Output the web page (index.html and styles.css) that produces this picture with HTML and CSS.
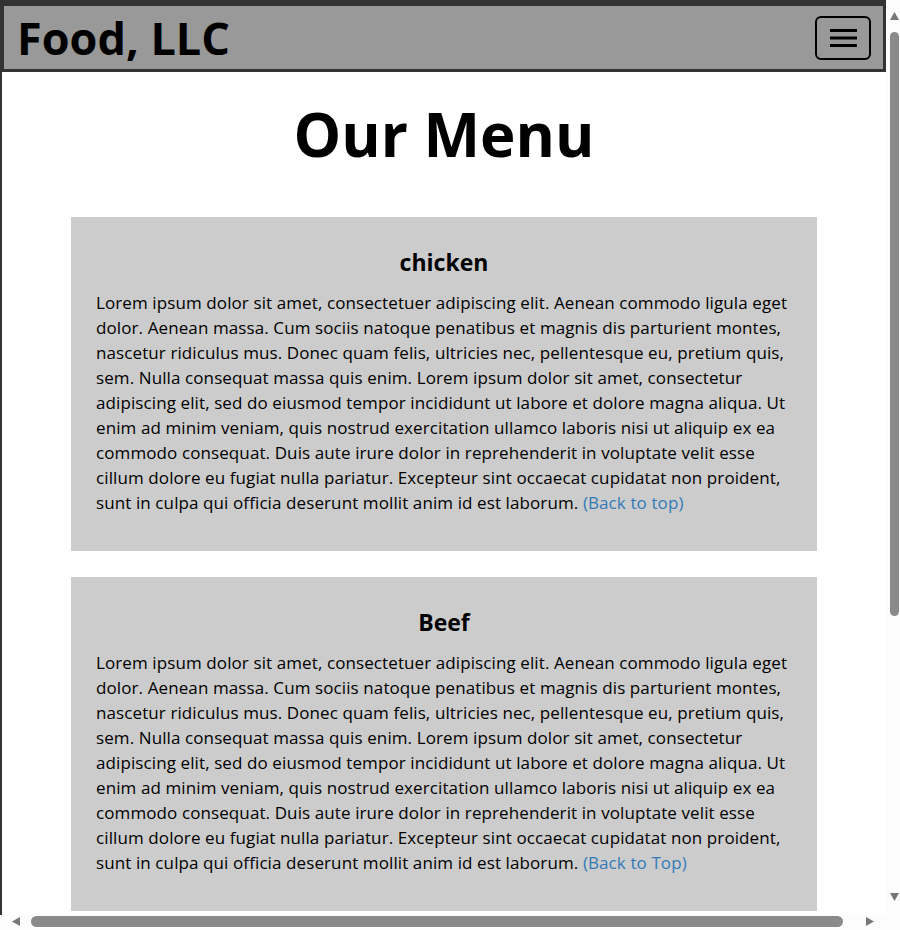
FILE: index.html
```html
<!DOCTYPE html>
<html lang="en">
<head>
<meta charset="utf-8">
<title>Food, LLC</title>
<link rel="stylesheet" href="styles.css">
</head>
<body>
<div class="window">
  <div class="viewport">
    <div class="page" id="top">
      <header class="site-header">
        <span class="brand">Food, LLC</span>
        <button class="menu-btn" aria-label="Menu">
          <svg width="27" height="18" viewBox="0 0 27 18"><path d="M0 1.5H27M0 9H27M0 16.5H27" stroke="#000" stroke-width="3"/></svg>
        </button>
      </header>
      <h1 class="title">Our Menu</h1>
      <section class="card" id="chicken">
        <h2>chicken</h2>
        <p>Lorem ipsum dolor sit amet, consectetuer adipiscing elit. Aenean commodo ligula eget dolor. Aenean massa. Cum sociis natoque penatibus et magnis dis parturient montes, nascetur ridiculus mus. Donec quam felis, ultricies nec, pellentesque eu, pretium quis, sem. Nulla consequat massa quis enim. Lorem ipsum dolor sit amet, consectetur adipiscing elit, sed do eiusmod tempor incididunt ut labore et dolore magna aliqua. Ut enim ad minim veniam, quis nostrud exercitation ullamco laboris nisi ut aliquip ex ea commodo consequat. Duis aute irure dolor in reprehenderit in voluptate velit esse cillum dolore eu fugiat nulla pariatur. Excepteur sint occaecat cupidatat non proident, sunt in culpa qui officia deserunt mollit anim id est laborum. <a href="#top">(Back to top)</a></p>
      </section>
      <section class="card" id="beef">
        <h2>Beef</h2>
        <p>Lorem ipsum dolor sit amet, consectetuer adipiscing elit. Aenean commodo ligula eget dolor. Aenean massa. Cum sociis natoque penatibus et magnis dis parturient montes, nascetur ridiculus mus. Donec quam felis, ultricies nec, pellentesque eu, pretium quis, sem. Nulla consequat massa quis enim. Lorem ipsum dolor sit amet, consectetur adipiscing elit, sed do eiusmod tempor incididunt ut labore et dolore magna aliqua. Ut enim ad minim veniam, quis nostrud exercitation ullamco laboris nisi ut aliquip ex ea commodo consequat. Duis aute irure dolor in reprehenderit in voluptate velit esse cillum dolore eu fugiat nulla pariatur. Excepteur sint occaecat cupidatat non proident, sunt in culpa qui officia deserunt mollit anim id est laborum. <a href="#top">(Back to Top)</a></p>
      </section>
    </div>
  </div>
  <div class="vbar">
    <div class="sb-btn sb-up"><svg width="9" height="8" viewBox="0 0 9 8"><path d="M4.5 0L9 8H0Z" fill="#777"/></svg></div>
    <div class="vtrack"><div class="vthumb"></div></div>
    <div class="sb-btn sb-down"><svg width="9" height="8" viewBox="0 0 9 8"><path d="M0 0H9L4.5 8Z" fill="#777"/></svg></div>
  </div>
  <div class="hbar">
    <div class="sb-btn sb-left"><svg width="8" height="9" viewBox="0 0 8 9"><path d="M8 0V9L0 4.5Z" fill="#777"/></svg></div>
    <div class="htrack"><div class="hthumb"></div></div>
    <div class="sb-btn sb-right"><svg width="8" height="9" viewBox="0 0 8 9"><path d="M0 0V9L8 4.5Z" fill="#777"/></svg></div>
  </div>
  <div class="corner"></div>
</div>
</body>
</html>
```
FILE: styles.css
```css
* { box-sizing: border-box; }
html, body { margin: 0; padding: 0; overflow: hidden; background: #fff; }
body { font-family: "Comic Sans MS", "Open Sans", sans-serif; color: #000; }

.window {
  width: 900px;
  height: 930px;
  display: grid;
  grid-template-columns: 886px 14px;
  grid-template-rows: 915px 15px;
  background: #fff;
}
.viewport { overflow: hidden; }

/* scrollbars */
.vbar, .hbar, .corner { background: #fcfcfc; }
.vbar { display: flex; flex-direction: column; }
.hbar { display: flex; flex-direction: row; }
.sb-btn svg { display: block; }
.sb-up { height: 28px; padding: 12px 0 0 4px; }
.sb-down { height: 28px; padding: 6px 0 0 4px; }
.sb-left { width: 28px; padding: 2px 0 0 12px; }
.sb-right { width: 28px; padding: 2px 0 0 8px; }
.vtrack { flex: 1; padding: 4px 1px 0 4px; }
.vthumb { height: 584px; background: #8a8a8a; border-radius: 5px; }
.htrack { flex: 1; padding: 1px 0 0 3px; }
.hthumb { width: 812px; height: 11px; background: #8a8a8a; border-radius: 6px; }

/* page */
.page {
  min-height: 100%;
  border-top: 3px solid #333;
  border-left: 2px solid #333;
}

.site-header {
  display: flex;
  align-items: center;
  justify-content: space-between;
  height: 69px;
  background: #999;
  border: 3px solid #333;
  border-left-width: 2px;
  padding: 0 12px 0 13px;
}
.brand {
  font-size: 45px;
  font-weight: bold;
  line-height: 1;
}
.menu-btn {
  width: 56px;
  height: 44px;
  border: 2px solid #000;
  border-radius: 6px;
  background: transparent;
  display: flex;
  align-items: center;
  justify-content: center;
  padding: 0;
}
.menu-btn svg { display: block; }

.title {
  margin: 0;
  padding: 12px 0 33px;
  text-align: center;
  font-size: 60px;
  font-weight: bold;
  line-height: 100px;
}

.card {
  width: 746px;
  margin: 0 auto 26px;
  background: #ccc;
  padding: 30px 25px 36px;
}
.card h2 {
  margin: 0 0 13px;
  text-align: center;
  font-size: 23px;
  font-weight: bold;
  line-height: 30px;
}
.card p {
  margin: 0;
  font-size: 17px;
  letter-spacing: 0.1px;
  line-height: 25px;
}
.card a { color: #337ab7; text-decoration: none; }
```
